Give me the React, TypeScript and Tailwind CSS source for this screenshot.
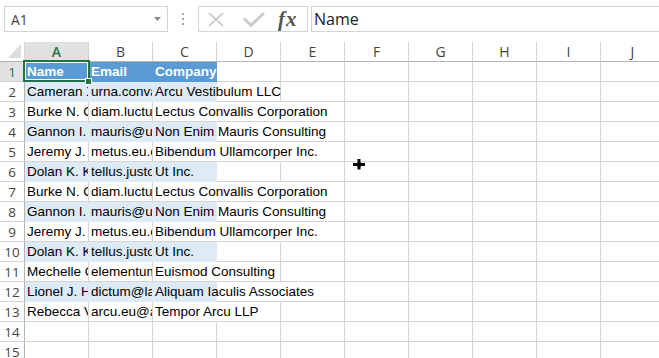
import React from 'react';

type Row = { a: string; b: string; c: string; span: number };

const data: Row[] = [
  { a: 'Name', b: 'Email', c: 'Company', span: 1 },
  { a: 'Cameran Xander', b: 'urna.convallis@arcu.com', c: 'Arcu Vestibulum LLC', span: 2 },
  { a: 'Burke N. Cortez', b: 'diam.luctus@lectus.org', c: 'Lectus Convallis Corporation', span: 3 },
  { a: 'Gannon I. Nash', b: 'mauris@utnonenim.net', c: 'Non Enim Mauris Consulting', span: 3 },
  { a: 'Jeremy J. Tucker', b: 'metus.eu.erat@bibendum.ca', c: 'Bibendum Ullamcorper Inc.', span: 3 },
  { a: 'Dolan K. Kirk', b: 'tellus.justo@utinc.edu', c: 'Ut Inc.', span: 1 },
  { a: 'Burke N. Cortez', b: 'diam.luctus@lectus.org', c: 'Lectus Convallis Corporation', span: 3 },
  { a: 'Gannon I. Nash', b: 'mauris@utnonenim.net', c: 'Non Enim Mauris Consulting', span: 3 },
  { a: 'Jeremy J. Tucker', b: 'metus.eu.erat@bibendum.ca', c: 'Bibendum Ullamcorper Inc.', span: 3 },
  { a: 'Dolan K. Kirk', b: 'tellus.justo@utinc.edu', c: 'Ut Inc.', span: 1 },
  { a: 'Mechelle Owen', b: 'elementum@euismod.com', c: 'Euismod Consulting', span: 2 },
  { a: 'Lionel J. Hart', b: 'dictum@lacus.org', c: 'Aliquam Iaculis Associates', span: 3 },
  { a: 'Rebecca Vance', b: 'arcu.eu@arcullp.com', c: 'Tempor Arcu LLP', span: 2 },
];

const COLS = ['A', 'B', 'C', 'D', 'E', 'F', 'G', 'H', 'I', 'J'];

interface CellProps {
  text?: string;
  fill?: 'head' | 'band';
  hideRight?: boolean;
  spill?: boolean;
  children?: React.ReactNode;
}

function Cell({ text, fill, hideRight, spill, children }: CellProps) {
  const look =
    fill === 'head'
      ? 'bg-[#5b9bd5] border-[#5b9bd5] text-white font-bold'
      : fill === 'band'
      ? 'bg-[#ddebf7] border-[#ddebf7] text-black'
      : hideRight
      ? 'border-b-[#d4d4d4] border-r-transparent text-black'
      : 'border-[#d4d4d4] text-black';

  return (
    <div className={`relative h-[20px] w-[64px] shrink-0 border-r border-b ${look}`}>
      {text && (
        <span
          className={`block whitespace-nowrap pl-[2px] pt-px leading-[18px] ${
            spill ? 'relative z-[1] overflow-visible' : 'overflow-hidden'
          }`}
        >
          {text}
        </span>
      )}
      {children}
    </div>
  );
}

function RowHead({ n, active }: { n: number; active?: boolean }) {
  return (
    <div
      className={`flex h-[20px] w-[25px] shrink-0 items-center justify-center border-r border-b border-r-[#b4b4b4] border-b-[#d4d4d4] pt-px text-[13.5px] ${
        active ? 'bg-[#e1e1e1] text-[#217346]' : 'text-[#444]'
      }`}
      style={{ fontFamily: '"Open Sans", sans-serif' }}
    >
      {n}
    </div>
  );
}

export default function App() {
  return (
    <div
      className="relative h-[358px] w-[659px] overflow-hidden bg-white text-[13.5px]"
      style={{ fontFamily: '"Liberation Sans", Arial, sans-serif' }}
    >
      {/* Formula bar */}
      <div className="flex h-[42px] items-start pl-[4px] pt-[6px]">
        <div
          className="flex h-[26px] w-[164px] shrink-0 items-center justify-between border border-[#d4d4d4] pl-[6px] pr-[6px] text-[14px] text-[#444]"
          style={{ fontFamily: '"Open Sans", sans-serif' }}
        >
          <span>A1</span>
          <svg width="7" height="4" viewBox="0 0 7 4">
            <path d="M0 0h7L3.5 4z" fill="#8a8a8a" />
          </svg>
        </div>
        <div className="flex h-[26px] w-[30px] shrink-0 flex-col items-center justify-center gap-[3px]">
          <span className="h-[2px] w-[2px] bg-[#a6a6a6]" />
          <span className="h-[2px] w-[2px] bg-[#a6a6a6]" />
          <span className="h-[2px] w-[2px] bg-[#a6a6a6]" />
        </div>
        <div className="flex h-[26px] w-[110px] shrink-0 items-center border border-[#d4d4d4] pl-[9px]">
          <svg width="16" height="15" viewBox="0 0 16 15">
            <path d="M1 1l14 13M15 1L1 14" stroke="#c4c4c4" strokeWidth="1.6" fill="none" />
          </svg>
          <svg className="ml-[19px]" width="22" height="15" viewBox="0 0 22 15">
            <path d="M1 6.5l7 6.8L21 1" stroke="#cbcbcb" strokeWidth="3" fill="none" />
          </svg>
          <span
            className="ml-[13px] text-[21px] font-bold italic leading-none tracking-[1px] text-[#555]"
            style={{ fontFamily: '"Liberation Serif", "Times New Roman", serif' }}
          >
            fx
          </span>
        </div>
        <div
          className="ml-[3px] flex h-[26px] flex-1 items-center border-y border-l border-[#d4d4d4] pl-[2px] text-[16px] text-[#222]"
          style={{ fontFamily: '"Open Sans", sans-serif' }}
        >
          Name
        </div>
      </div>

      {/* Column headers */}
      <div className="flex" style={{ fontFamily: '"Open Sans", sans-serif' }}>
        <div className="relative h-[20px] w-[25px] shrink-0 border-r border-b border-r-[#d4d4d4] border-b-[#b4b4b4]">
          <svg className="absolute left-[8px] top-[2px]" width="14" height="15" viewBox="0 0 14 15">
            <path d="M13 0v14H0z" fill="#dcdcdc" />
          </svg>
        </div>
        {COLS.map((c, i) => (
          <div
            key={c}
            className={`flex h-[20px] w-[64px] shrink-0 items-center justify-center border-r border-b border-r-[#d4d4d4] border-b-[#b4b4b4] text-[14px] ${
              i === 0 ? 'bg-[#e1e1e1] font-semibold text-[#217346]' : 'text-[#444]'
            }`}
          >
            {c}
          </div>
        ))}
      </div>

      {/* Sheet rows */}
      {Array.from({ length: 15 }, (_, idx) => {
        const n = idx + 1;
        const row = data[idx];
        const fill = n === 1 ? 'head' : n % 2 === 0 && row ? 'band' : undefined;
        const span = row ? row.span : 1;
        return (
          <div key={n} className="flex">
            <RowHead n={n} active={n === 1} />
            {COLS.map((c, ci) => {
              if (!row) return <Cell key={c} />;
              if (ci === 0)
                return (
                  <Cell key={c} text={row.a} fill={fill}>
                    {n === 1 && (
                      <>
                        <div className="absolute left-[-2px] top-[-2px] z-10 h-[22px] w-[67px] border-2 border-[#217346] shadow-[inset_0_0_0_1px_#fff]" />
                        <div className="absolute left-[60px] top-[16px] z-20 h-[7px] w-[7px] border border-white bg-[#217346]" />
                      </>
                    )}
                  </Cell>
                );
              if (ci === 1) return <Cell key={c} text={row.b} fill={fill} />;
              if (ci === 2)
                return <Cell key={c} text={row.c} fill={fill} spill hideRight={span > 1} />;
              if (ci === 3) return <Cell key={c} hideRight={span > 2} />;
              return <Cell key={c} />;
            })}
          </div>
        );
      })}

      {/* Mouse cursor */}
      <svg className="absolute left-[352px] top-[158px]" width="14" height="12" viewBox="0 0 14 12">
        <path d="M5 0.5h4v4h4.5v4H9v3.5H5V8.5H0.5v-4H5z" fill="#000" stroke="#fff" strokeWidth="1" />
      </svg>
    </div>
  );
}
